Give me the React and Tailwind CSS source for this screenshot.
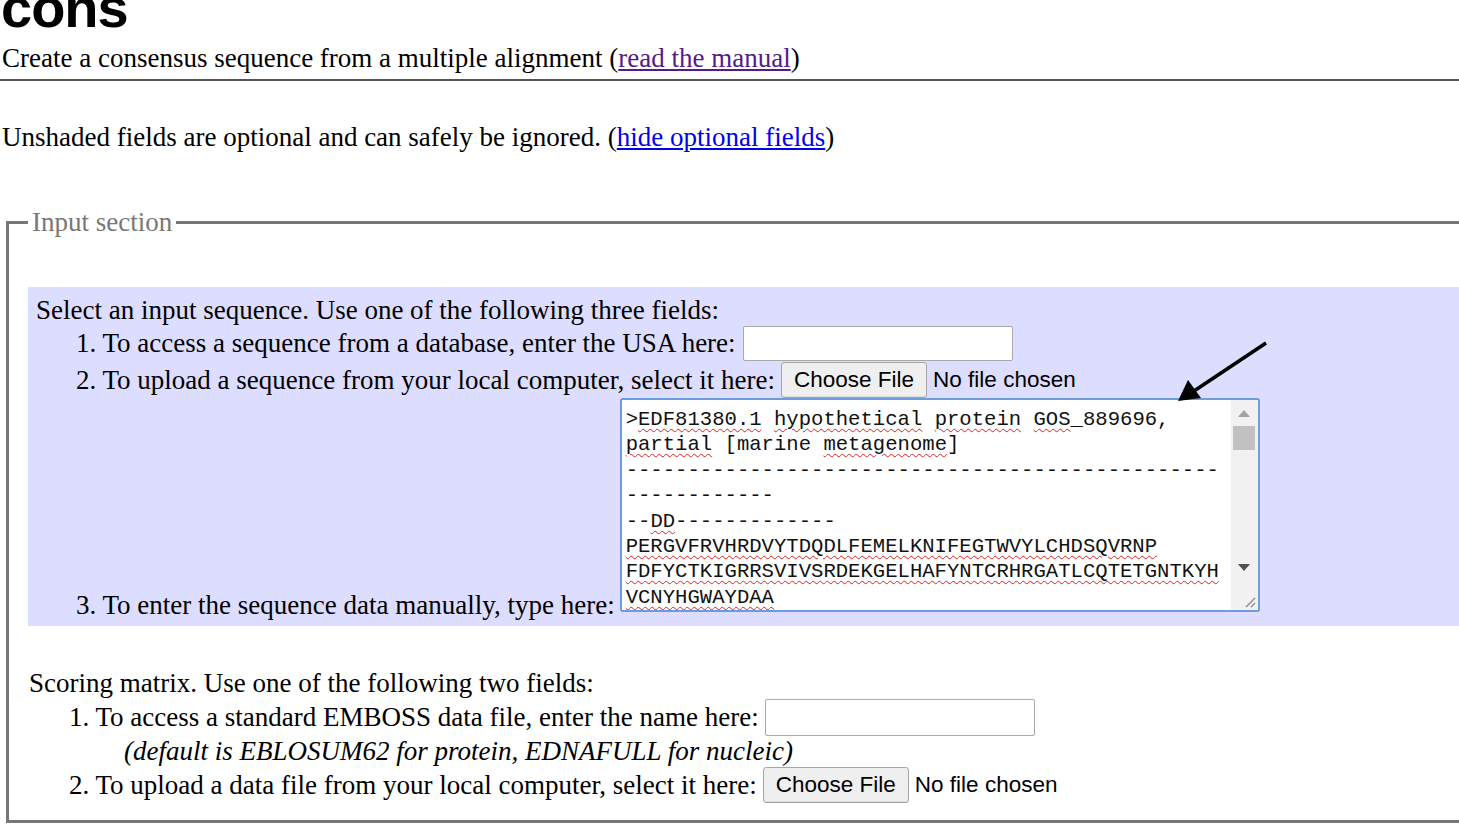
import React from 'react'

const serif = "font-['Liberation_Serif',serif]"
const sans = "font-['Liberation_Sans',Arial,sans-serif]"

const Sp = ({ children }) => (
    <span className="underline decoration-wavy decoration-[#e02020] decoration-1 underline-offset-[3px]">{children}</span>
)

const FileBox = () => (
    <span className={`flex items-center ${sans} text-[22.5px]`}>
        <span className="inline-flex items-center h-[36px] px-[12px] bg-[#efefef] border border-[#a6a6a6] rounded-[3px] shadow-[inset_0_-1px_0_#ddd]">Choose File</span>
        <span className="ml-[6px]">No file chosen</span>
    </span>
)

const SeqBox = () => (
    <div className="relative w-[640px] h-[214px] bg-white border-2 border-[#6b9be0] rounded-[3px] overflow-hidden">
        <div className="font-['Liberation_Mono',monospace] text-[20.6px] leading-[25.4px] pl-[4px] pt-[7px] text-[#111] whitespace-pre">
            <div>&gt;<Sp>EDF81380.1</Sp> <Sp>hypothetical</Sp> <Sp>protein</Sp> <Sp>GOS</Sp>_889696,</div>
            <div><Sp>partial</Sp> [marine <Sp>metagenome</Sp>]</div>
            <div>------------------------------------------------</div>
            <div>------------</div>
            <div>--<Sp>DD</Sp>-------------</div>
            <div><Sp>PERGVFRVHRDVYTDQDLFEMELKNIFEGTWVYLCHDSQVRNP</Sp></div>
            <div><Sp>FDFYCTKIGRRSVIVSRDEKGELHAFYNTCRHRGATLCQTETGNTKYH</Sp></div>
            <div><Sp>VCNYHGWAYDAA</Sp></div>
        </div>
        {/* scrollbar */}
        <div className="absolute top-0 right-0 w-[27px] h-full bg-[#f1f1f1] flex flex-col items-center">
            <div className="h-[26px] flex items-center justify-center">
                <div className="w-0 h-0 border-l-[6px] border-r-[6px] border-b-[7px] border-l-transparent border-r-transparent border-b-[#a3a3a3]"></div>
            </div>
            <div className="w-[22px] h-[24px] bg-[#c1c1c1]"></div>
            <div className="flex-1"></div>
            <div className="h-[26px] flex items-center justify-center mb-[30px]">
                <div className="w-0 h-0 border-l-[6px] border-r-[6px] border-t-[7px] border-l-transparent border-r-transparent border-t-[#505050]"></div>
            </div>
        </div>
        <svg className="absolute right-[2px] bottom-[2px]" width="14" height="14" viewBox="0 0 14 14">
            <path d="M13 4 L4 13 M13 9 L9 13" stroke="#888" strokeWidth="1.3" />
        </svg>
    </div>
)

const App = () => {
    return (
        <div className={`relative w-[1459px] h-[826px] overflow-hidden bg-white text-black ${serif} text-[27px]`}>
            <h1 className={`${sans} font-bold text-[56px] leading-[56px] mt-[-20px] ml-[1px] tracking-[-1px]`}>cons</h1>
            <p className="leading-[30px] mt-[7px] ml-[2px]">
                Create a consensus sequence from a multiple alignment (<a className="text-[#551a8b] underline">read the manual</a>)
            </p>
            <hr className="mt-[6px] border-0 border-t-2 border-[#555]" />
            <p className="leading-[30px] mt-[41px] ml-[2px]">
                Unshaded fields are optional and can safely be ignored. (<a className="text-[#0000ee] underline">hide optional fields</a>)
            </p>

            <fieldset className="mt-[57px] ml-[6px] w-[1480px] h-[614px] border-[3px] border-[#777] pl-[19px]">
                <legend className="px-[4px] text-[#777] leading-[26px]">Input section</legend>

                <div className="mt-[52px] bg-[#ddddff] pl-[8px] pt-[7px] pb-[14px]">
                    <div className="leading-[32px]">Select an input sequence. Use one of the following three fields:</div>
                    <div className="pl-[40px]">
                        <div className="flex items-end mt-[-1px]">
                            <span className="leading-[36px] mr-[7px]">1. To access a sequence from a database, enter the USA here:</span>
                            <span className="w-[270px] h-[35px] bg-white border border-[#a9a9a9] rounded-[2px]"></span>
                        </div>
                        <div className="flex items-end mt-[1px]">
                            <span className="leading-[36px] mr-[6px]">2. To upload a sequence from your local computer, select it here:</span>
                            <FileBox />
                        </div>
                        <div className="flex items-end">
                            <span className="leading-[26px] mr-[5px] mb-[-6px]">3. To enter the sequence data manually, type here:</span>
                            <SeqBox />
                        </div>
                    </div>
                </div>

                <div className="mt-[41px] pl-[1px]">
                    <div className="leading-[32px]">Scoring matrix. Use one of the following two fields:</div>
                    <div className="pl-[40px]">
                        <div className="flex items-end">
                            <span className="leading-[37px] mr-[6px]">1. To access a standard EMBOSS data file, enter the name here:</span>
                            <span className="w-[270px] h-[37px] bg-white border border-[#a9a9a9] rounded-[2px]"></span>
                        </div>
                        <div className="italic pl-[55px] leading-[31px]">(default is EBLOSUM62 for protein, EDNAFULL for nucleic)</div>
                        <div className="flex items-end">
                            <span className="leading-[36px] mr-[6px]">2. To upload a data file from your local computer, select it here:</span>
                            <FileBox />
                        </div>
                    </div>
                </div>
            </fieldset>

            <svg className="absolute left-[1170px] top-[338px]" width="104" height="70" viewBox="0 0 104 70">
                <line x1="96" y1="5" x2="24" y2="53" stroke="#000" strokeWidth="3.5" />
                <polygon points="8,63 18,42 31,60" fill="#000" />
            </svg>
        </div>
    )
}

export default App
